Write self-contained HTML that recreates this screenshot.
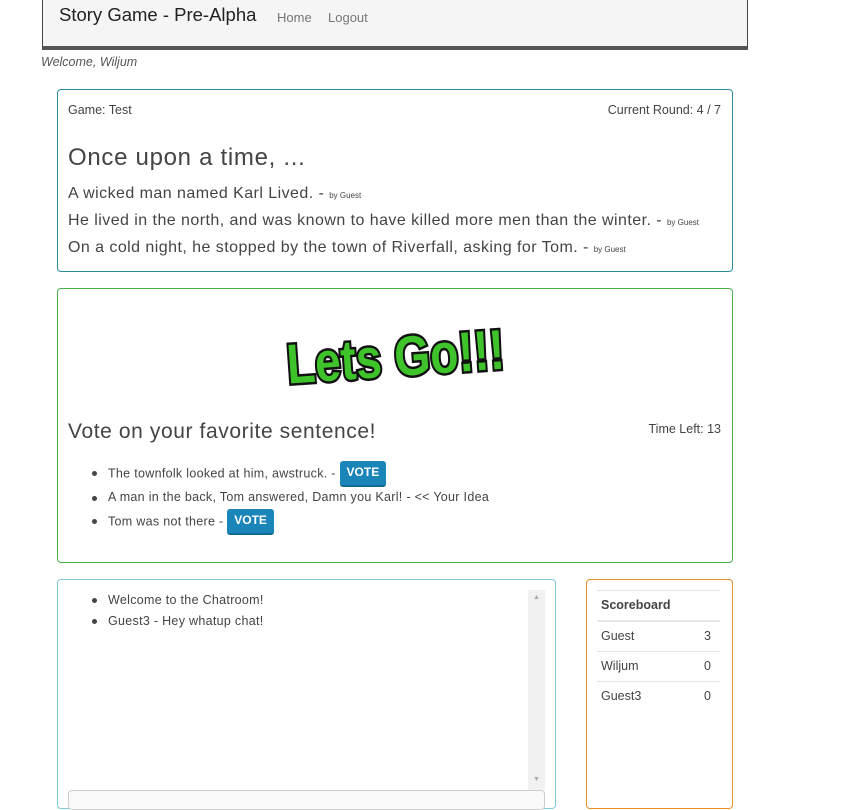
<!DOCTYPE html>
<html><head><style>
body{margin:0;width:860px;height:796px;background:#fff;font-family:"Liberation Sans",sans-serif;color:#444;position:relative;overflow:hidden}
.a{position:absolute;white-space:nowrap}
.nav{left:42px;top:-1px;width:704px;height:46px;background:#f5f5f5;border:1px solid #444;border-bottom:4px solid #555}
.p{position:absolute;border-radius:4px;box-sizing:border-box}
.by{font-size:8px;letter-spacing:0}
.btn{display:inline-block;background:#1a85b8;color:#fff;font-weight:bold;font-size:12px;padding:4px 7px 6px;border-radius:3px;border-bottom:2px solid #0f6a93;vertical-align:middle;letter-spacing:0}
.dot{position:absolute;width:5px;height:5px;border-radius:50%;background:#444}
.sb{font-size:12.5px;color:#444}
.s{font-size:16px;letter-spacing:0.45px}
.t{font-size:12.5px;letter-spacing:0.3px}
</style></head><body>
<div class="a nav"></div>
<div class="a" style="left:59px;top:4px;font-size:18.5px;color:#222">Story Game - Pre-Alpha</div>
<div class="a" style="left:277px;top:10px;font-size:13px;color:#777">Home</div>
<div class="a" style="left:328px;top:10px;font-size:13px;color:#777">Logout</div>
<div class="a" style="left:41px;top:55px;font-size:12.5px;font-style:italic;color:#555">Welcome, Wiljum</div>

<div class="p" style="left:57px;top:89px;width:676px;height:183px;border:1px solid #2b8c9c"></div>
<div class="a" style="left:68px;top:103px;font-size:12.5px">Game: Test</div>
<div class="a" style="right:139px;top:103px;font-size:12.5px">Current Round: 4 / 7</div>
<div class="a" style="left:68px;top:144px;font-size:24px;letter-spacing:0.7px;color:#444">Once upon a time, ...</div>
<div class="a s" style="left:68px;top:185px">A wicked man named Karl Lived. - <span class="by">by Guest</span></div>
<div class="a s" style="left:68px;top:212px">He lived in the north, and was known to have killed more men than the winter. - <span class="by">by Guest</span></div>
<div class="a s" style="left:68px;top:239px">On a cold night, he stopped by the town of Riverfall, asking for Tom. - <span class="by">by Guest</span></div>

<div class="p" style="left:57px;top:288px;width:676px;height:275px;border:1px solid #4aae4a"></div>
<svg class="a" style="left:280px;top:314px" width="232" height="72" viewBox="0 0 232 72">
<g transform="rotate(-4 116 36)">
<text x="6" y="62" font-family="Liberation Sans" font-weight="bold" font-size="56" fill="#3ec42a" stroke="#111" stroke-width="5" paint-order="stroke" textLength="218" lengthAdjust="spacingAndGlyphs">Lets Go!!!</text>
</g></svg>
<div class="a" style="left:68px;top:420px;font-size:21px;letter-spacing:0.6px;color:#444">Vote on your favorite sentence!</div>
<div class="a" style="right:139px;top:422px;font-size:12.5px">Time Left: 13</div>
<div class="dot" style="left:92px;top:471px"></div>
<div class="a t" style="left:108px;top:461px">The townfolk looked at him, awstruck. - <span class="btn">VOTE</span></div>
<div class="dot" style="left:92px;top:496px"></div>
<div class="a t" style="left:108px;top:490px">A man in the back, Tom answered, Damn you Karl! - &lt;&lt; Your Idea</div>
<div class="dot" style="left:92px;top:519px"></div>
<div class="a t" style="left:108px;top:509px">Tom was not there - <span class="btn">VOTE</span></div>

<div class="p" style="left:57px;top:579px;width:499px;height:230px;border:1px solid #7fcbdc"></div>
<div class="a" style="left:528px;top:590px;width:17px;height:200px;background:#f1f1f1"></div>
<div class="a" style="left:533px;top:594px;font-size:7px;color:#aaa">▲</div>
<div class="a" style="left:533px;top:776px;font-size:7px;color:#aaa">▼</div>
<div class="p" style="left:68px;top:790px;width:477px;height:20px;border:1px solid #ccc;background:#fafafa"></div>
<div class="dot" style="left:92px;top:598px"></div>
<div class="a t" style="left:108px;top:593px">Welcome to the Chatroom!</div>
<div class="dot" style="left:92px;top:619px"></div>
<div class="a t" style="left:108px;top:614px">Guest3 - Hey whatup chat!</div>

<div class="p" style="left:586px;top:579px;width:147px;height:230px;border:1px solid #e8902a"></div>
<div class="a" style="left:597px;top:590px;width:123px;border-top:1px solid #e5e5e5"></div>
<div class="a sb" style="left:601px;top:598px;font-weight:bold">Scoreboard</div>
<div class="a" style="left:597px;top:620px;width:123px;border-top:2px solid #e5e5e5"></div>
<div class="a sb" style="left:601px;top:629px">Guest</div><div class="a sb" style="left:704px;top:629px">3</div>
<div class="a" style="left:597px;top:651px;width:123px;border-top:1px solid #e5e5e5"></div>
<div class="a sb" style="left:601px;top:659px">Wiljum</div><div class="a sb" style="left:704px;top:659px">0</div>
<div class="a" style="left:597px;top:681px;width:123px;border-top:1px solid #e5e5e5"></div>
<div class="a sb" style="left:601px;top:689px">Guest3</div><div class="a sb" style="left:704px;top:689px">0</div>
</body></html>
